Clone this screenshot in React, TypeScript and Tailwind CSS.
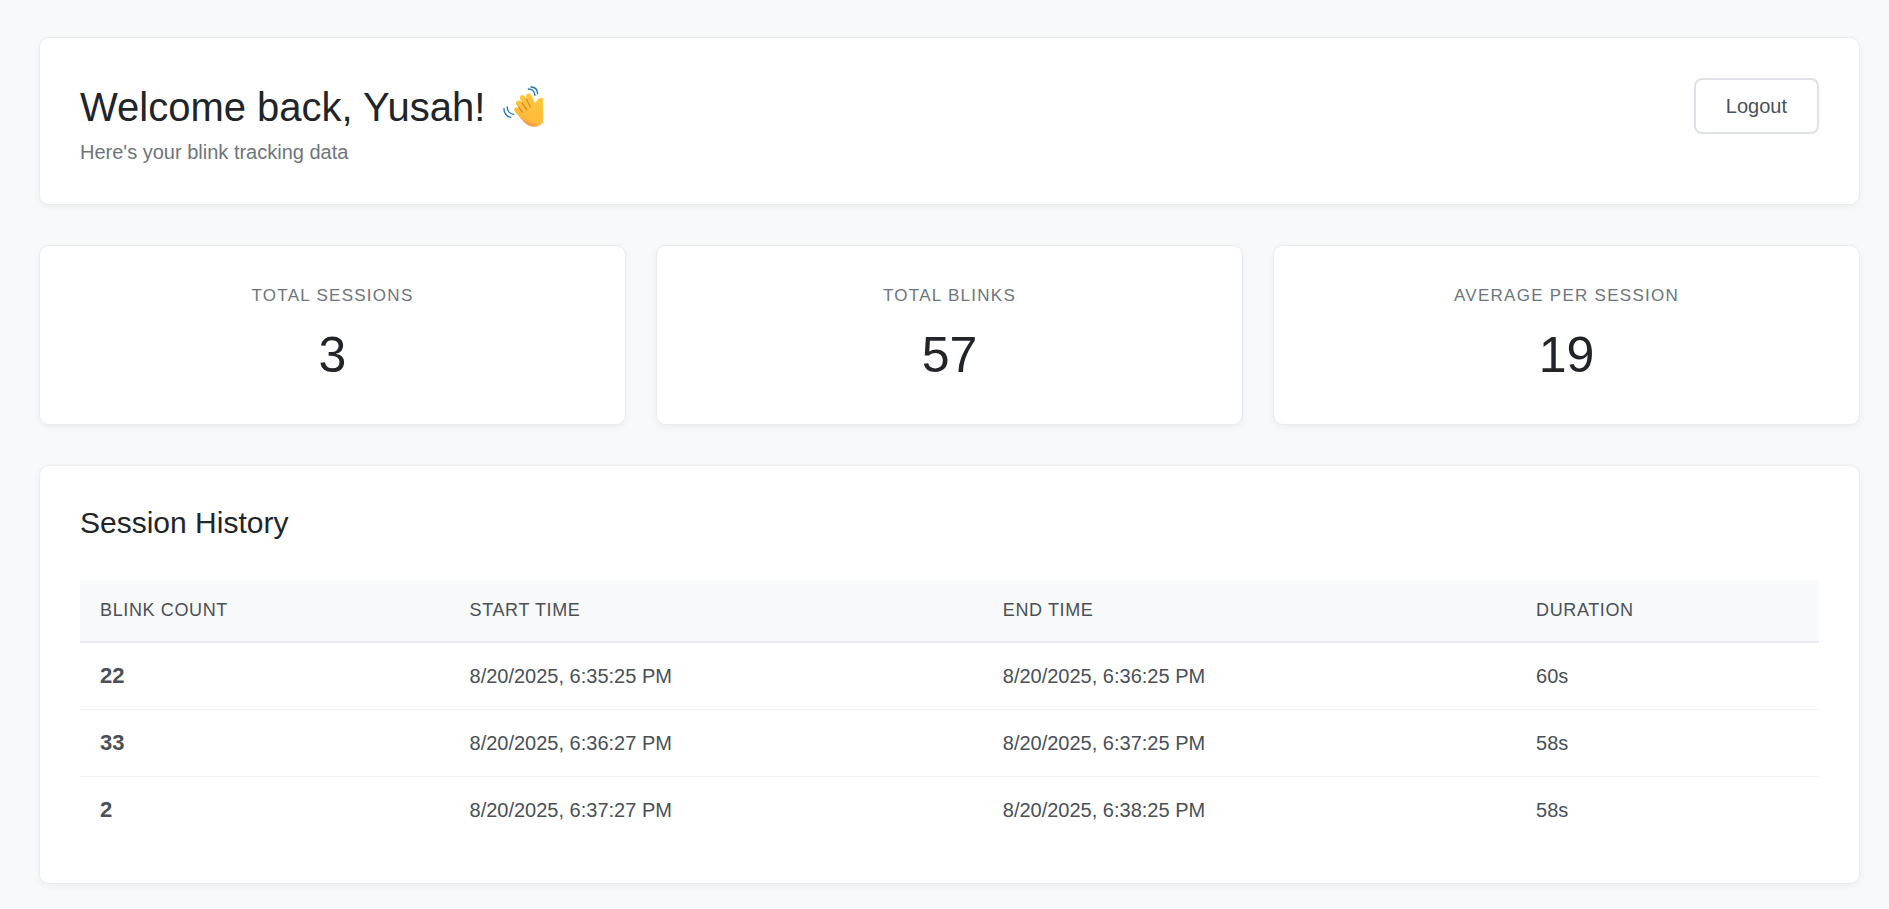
import type { ReactNode } from "react";

type Session = { count: number; start: string; end: string; duration: string };

const stats = [
  { label: "Total Sessions", value: "3" },
  { label: "Total Blinks", value: "57" },
  { label: "Average Per Session", value: "19" },
];

const columns = ["Blink Count", "Start Time", "End Time", "Duration"];

const sessions: Session[] = [
  { count: 22, start: "8/20/2025, 6:35:25 PM", end: "8/20/2025, 6:36:25 PM", duration: "60s" },
  { count: 33, start: "8/20/2025, 6:36:27 PM", end: "8/20/2025, 6:37:25 PM", duration: "58s" },
  { count: 2, start: "8/20/2025, 6:37:27 PM", end: "8/20/2025, 6:38:25 PM", duration: "58s" },
];

function Card({ className, children }: { className: string; children: ReactNode }) {
  return (
    <section
      className={`rounded-[10px] border border-[#e9ecef] bg-white shadow-[0_2px_8px_rgba(0,0,0,0.05)] ${className}`}
    >
      {children}
    </section>
  );
}

function WavingHand() {
  return (
    <svg viewBox="36 30 120 126" className="h-[42px] w-10 shrink-0" role="img" aria-label="Waving hand">
      <defs>
        <linearGradient id="palm" x1="0.8" y1="0.1" x2="0.45" y2="1">
          <stop offset="0" stopColor="#ffc83d" />
          <stop offset="0.78" stopColor="#ffb93a" />
          <stop offset="1" stopColor="#f5834d" />
        </linearGradient>
      </defs>
      <path
        d="M70 104C67 97 74 92 80 96L86 99L76 86C71 77 81 69 89 76L96 84L87 70C84 59 95 52 101 61L108 72L105 62C105 52 117 49 122 59L133 83C136 77 139 70 146 67C151 65 156 66 158 69V136C150 149 136 156 120 151C106 147 98 139 70 104Z"
        fill="url(#palm)"
      />
      <g fill="none" stroke="#c87a22" strokeWidth="4" strokeLinecap="round" opacity="0.75">
        <path d="M83 94L95 109" />
        <path d="M93 80L107 101" />
        <path d="M106 69L118 93" />
      </g>
      <g fill="none" stroke="#1f74b8" strokeWidth="4" strokeLinecap="round">
        <path d="M120 33C131 33 139 41 140 53" />
        <path d="M112 39C123 39 131 47 132 58" />
        <path d="M39 98C38 110 47 122 59 124" />
        <path d="M49 93C48 104 56 113 68 115" />
      </g>
    </svg>
  );
}

export default function App() {
  return (
    <main className="flex min-h-screen flex-col gap-10 bg-[#f8f9fa] pt-[37px] pr-[29px] pb-[25px] pl-[39px] font-['Liberation_Sans',Arial,sans-serif] text-[#495057]">
      <Card className="flex items-start justify-between p-10">
        <div>
          <h1 className="flex items-center gap-[18px] text-[40px] leading-[58px] text-[#212529]">
            Welcome back, Yusah!
            <WavingHand />
          </h1>
          <p className="pt-1 text-[20px] leading-6 text-[#6c757d]">Here's your blink tracking data</p>
        </div>
        <button
          type="button"
          className="rounded-lg border-2 border-[#dee2e6] bg-white px-[30px] py-3.5 text-[20px] leading-6"
        >
          Logout
        </button>
      </Card>

      <div className="grid grid-cols-3 gap-[30px]">
        {stats.map((stat) => (
          <Card key={stat.label} className="flex flex-col gap-[18px] px-10 py-[39px] text-center">
            <h2 className="text-[17px] leading-[22px] tracking-[0.075em] text-[#6c757d] uppercase">
              {stat.label}
            </h2>
            <p className="text-[50px] leading-[60px] text-[#212529]">{stat.value}</p>
          </Card>
        ))}
      </div>

      <Card className="p-10">
        <h2 className="mb-10 text-[30px] leading-[34px] text-[#212529]">Session History</h2>
        <table className="w-full border-collapse text-left text-[20px] leading-[26px]">
          <thead>
            <tr className="border-b-2 border-[#e9ecef] bg-[#f8f9fa]">
              {columns.map((column) => (
                <th
                  key={column}
                  scope="col"
                  className="px-5 pt-5 pb-[21px] text-[18px] leading-5 font-normal tracking-[0.035em] uppercase"
                >
                  {column}
                </th>
              ))}
            </tr>
          </thead>
          <tbody>
            {sessions.map((session) => (
              <tr key={session.start} className="border-b border-[#f1f3f5] last:border-b-0">
                <td className="px-5 py-5 text-[22px] font-bold">{session.count}</td>
                <td className="px-5 py-5">{session.start}</td>
                <td className="px-5 py-5">{session.end}</td>
                <td className="px-5 py-5">{session.duration}</td>
              </tr>
            ))}
          </tbody>
        </table>
      </Card>
    </main>
  );
}
